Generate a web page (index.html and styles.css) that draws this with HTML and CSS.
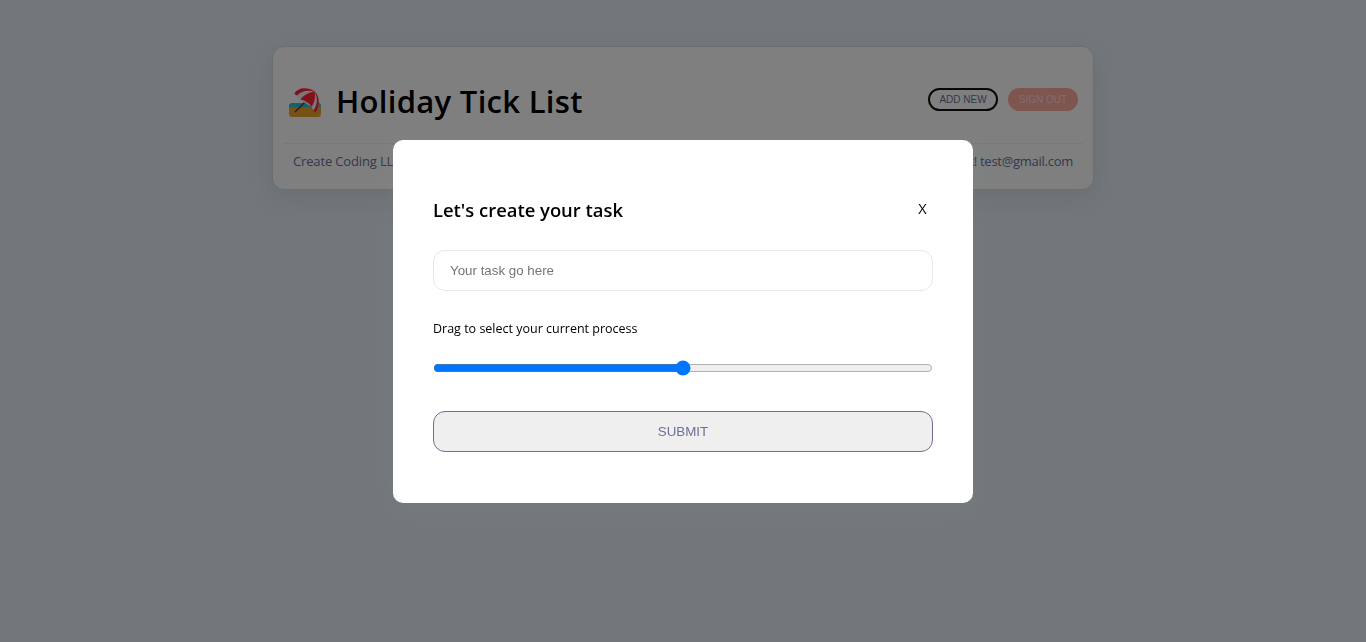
FILE: index.html
```html
<!DOCTYPE html>
<html lang="en">
<head>
<meta charset="utf-8">
<title>Holiday Tick List</title>
<link rel="stylesheet" href="styles.css">
</head>
<body>
<main class="app">
  <header class="list-header">
    <div class="title-row">
      <h1 class="title">
        <svg class="beach" viewBox="0 0 32 30" aria-hidden="true">
          <rect y="15" width="32" height="14" rx="3.500" fill="#f0a32f"/>
          <path d="M0 19.200v-.8Q0 15 3.500 15h25q3.500 0 3.500 3.400v.8z" fill="#1fc6d2"/>
          <path d="M6 24 20 10" stroke="#5c3028" stroke-width="1.300" fill="none"/>
          <path d="M5.300 5.500C9-.3 18-1.300 25.700 3.300 31 9 31 19 26.500 25l-4-6L11 12z" fill="#f2eeee"/>
          <path d="M5.300 5.800C8.500-.5 18-1.500 25.700 3.300 18 1.800 11.500 3.200 8 7.600z" fill="#ff2436"/>
          <path d="M25.700 3.300Q16 5 11.500 11.500q4 .4 6.500 2.800 3.500 1.800 4.600 4.600Q27.300 12 25.700 3.300z" fill="#ff2436"/>
          <path d="M25.700 3.300C31.200 9 31 19 26.500 25l-2.200-2.600c4-5.400 4.400-12.400 1.400-19.100z" fill="#ff2436"/>
          <path d="M25.800 4.500c3 6 2.500 12.500-1.200 17.800l-1.800-3.100c3.200-5 4-9.700 3-14.700z" fill="#f2eeee"/>
        </svg>
        <span>Holiday Tick List</span>
      </h1>
      <div class="actions">
        <button class="pill add" type="button">ADD NEW</button>
        <button class="pill signout" type="button">SIGN OUT</button>
      </div>
    </div>
    <div class="info-row">
      <span class="company">Create Coding LLC</span>
      <span class="user"><span class="welcome">Welcome back!</span> test@gmail.com</span>
    </div>
  </header>
</main>
<div class="overlay">
  <section class="modal">
    <div class="modal-head">
      <h3 class="modal-title">Let's create your task</h3>
      <button class="close" type="button">X</button>
    </div>
    <form class="form">
      <input class="task" type="text" placeholder="Your task go here">
      <label class="range-label" for="range">Drag to select your current process</label>
      <input class="range" id="range" type="range" min="0" max="100" value="50">
      <button class="submit" type="button">SUBMIT</button>
    </form>
  </section>
</div>
</body>
</html>
```
FILE: styles.css
```css
* { box-sizing: border-box; }
body {
  margin: 0;
  min-height: 100vh;
  overflow: hidden;
  background: #e4eef5;
  font-family: "Trebuchet MS", "Open Sans", sans-serif;
}
button, input { font-family: "Liberation Sans", sans-serif; }
.app { padding-top: 46px; }
.list-header {
  width: 822px;
  height: 144px;
  margin: 0 auto;
  padding: 16px 10px 0;
  background: #fff;
  border: 1px solid #d3dce3;
  border-radius: 12px;
  box-shadow: rgba(149, 157, 165, .2) 0 8px 24px;
}
.title-row {
  display: flex;
  align-items: center;
  justify-content: space-between;
  height: 81px;
  padding: 0 5px 8px 6px;
  border-bottom: 1px solid #f0f0f2;
}
.title {
  display: flex;
  align-items: center;
  gap: 15px;
  margin: 3px 0 0;
  font-size: 31px;
  line-height: 44px;
  font-weight: 600;
  letter-spacing: .3px;
  white-space: nowrap;
}
.beach { width: 32px; height: 30px; margin-top: 4px; }
.actions { display: flex; gap: 10px; }
.pill {
  width: 70px;
  height: 23px;
  padding: 1px 0 0;
  border-radius: 12px;
  font-size: 10px;
  line-height: 12px;
}
.add { background: transparent; border: 2px solid #101010; color: #6b7099; }
.signout { background: #ffaa9e; border: 0; color: #ffdcd6; }
.info-row {
  display: flex;
  justify-content: space-between;
  padding: 7px 10px;
  font-size: 13px;
  line-height: 20px;
  letter-spacing: -.27px;
  color: #6b7099;
}
.company { letter-spacing: -.15px; }
.welcome { color: #3b8f91; }
.overlay {
  position: fixed;
  inset: 0;
  display: flex;
  align-items: center;
  justify-content: center;
  background: rgba(0, 0, 0, .5);
}
.modal {
  width: 580px;
  height: 363px;
  padding: 52px 40px 0;
  background: #fff;
  border-radius: 10px;
  box-shadow: rgba(149, 157, 165, .1) 0 8px 24px;
}
.modal-head {
  display: flex;
  align-items: center;
  justify-content: space-between;
  height: 35px;
}
.modal-title { margin: 0; font-size: 18.400px; font-weight: 600; }
.close {
  width: 21px;
  padding: 0 0 1px;
  border: 0;
  background: none;
  font: 14.500px "Trebuchet MS", "Open Sans", sans-serif;
  color: #000;
}
.form { display: flex; flex-direction: column; margin-top: 23px; }
.task {
  height: 41px;
  padding: 0 16px;
  border: 1px solid #e5e7eb;
  border-radius: 12px;
  font-size: 13.330px;
}
.task::placeholder { color: #757575; }
.range-label { margin-top: 28px; font-size: 12.500px; line-height: 20px; }
.range { width: 500px; height: 16px; margin: 21px 0 35px; }
.submit {
  height: 41px;
  padding: 0;
  border: 1px solid #6b7099;
  border-radius: 12px;
  background: #efefef;
  color: #6b7099;
  font-size: 13.330px;
}
```
